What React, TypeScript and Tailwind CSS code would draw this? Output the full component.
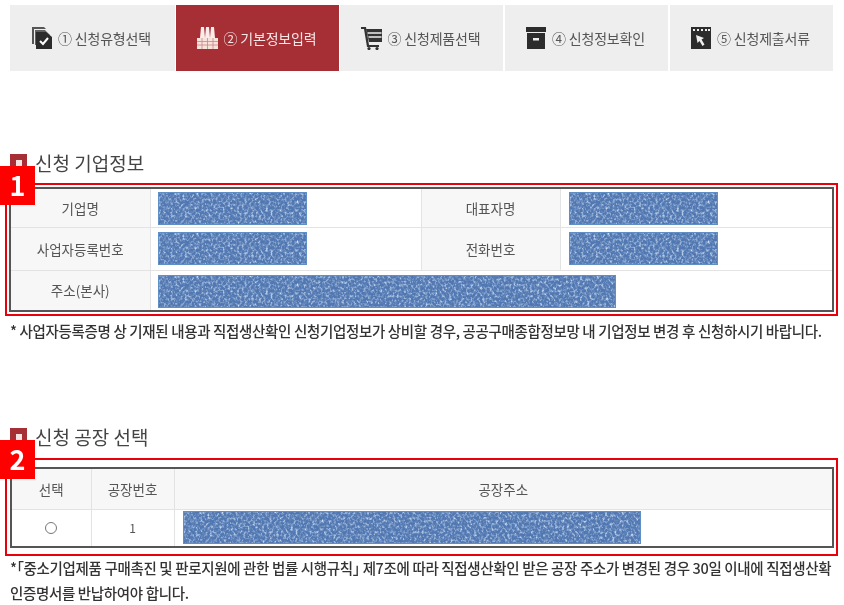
import React from "react";

const font = { fontFamily: '"Noto Sans CJK KR", "Noto Sans", sans-serif' };

function Redact({ w, id }: { w: number; id: string }) {
  return (
    <svg width={w} height={33} className="block border border-[#5f8fc4]">
      <filter id={`${id}l`} x="0" y="0" width="100%" height="100%">
        <feTurbulence type="fractalNoise" baseFrequency="0.42 0.36" numOctaves={2} seed={7} />
        <feColorMatrix type="matrix" values="0 0 0 0 0.68  0 0 0 0 0.78  0 0 0 0 0.95  2.400 0 0 0 -1.100" />
      </filter>
      <filter id={`${id}d`} x="0" y="0" width="100%" height="100%">
        <feTurbulence type="fractalNoise" baseFrequency="0.38 0.44" numOctaves={2} seed={19} />
        <feColorMatrix type="matrix" values="0 0 0 0 0.13  0 0 0 0 0.25  0 0 0 0 0.48  0 2.400 0 0 -1.150" />
      </filter>
      <rect width="100%" height="100%" fill="#5077b2" />
      <rect width="100%" height="100%" filter={`url(#${id}l)`} />
      <rect width="100%" height="100%" filter={`url(#${id}d)`} />
    </svg>
  );
}

const icons = [
  <svg key="1" width="20" height="22" viewBox="0 0 20 22">
    <path d="M0 0h12l2 2H2v15H0z" fill="#555" />
    <path d="M3 3h10l5 5v1H5v9H3z" fill="#333" opacity="0.75" />
    <path d="M4 5h10l6 5v12H4z" fill="#2c2c2c" />
    <path d="M8 14l3 3 5-6" fill="none" stroke="#fff" strokeWidth="2" />
  </svg>,
  <svg key="2" width="21" height="22" viewBox="0 0 21 22">
    <path d="M4 0h3l1 11H3zM9 0h3l1 11H8zM14 0h3l1 11h-5z" fill="#fbeeea" />
    <path d="M0 11h21v11H0z" fill="#f8e2dc" />
    <path d="M0 14.500h21M0 18h21M5 11v11M10.500 11v11M16 11v11" stroke="#c98682" strokeWidth="0.8" />
  </svg>,
  <svg key="3" width="21" height="23" viewBox="0 0 21 23">
    <path d="M0 0h5l3 18h10v2H6L3 2H0z" fill="#333" />
    <path d="M5 2h16v13H8z" fill="#333" />
    <path d="M6.500 6h14M7.500 10h13" stroke="#eee" strokeWidth="1.3" />
    <circle cx="8" cy="21.500" r="1.600" fill="#333" />
    <circle cx="16" cy="21.500" r="1.600" fill="#333" />
  </svg>,
  <svg key="4" width="20" height="22" viewBox="0 0 20 22">
    <path d="M0 0h20v5H0zM1 6h18v16H1z" fill="#2c2c2c" />
    <path d="M7 11h6v2.500H7z" fill="#eee" />
  </svg>,
  <svg key="5" width="20" height="22" viewBox="0 0 20 22">
    <path d="M0 0h20v22H0z" fill="#2c2c2c" />
    <path d="M2 2h2v2H2zM6 2h2v2H6zM10 2h2v2h-2zM14 2h2v2h-2zM17 2h2v2h-2z" fill="#eee" />
    <path d="M5 8l8 3-2.500 1.500 3 5-2 1.500-3-5-2 2z" fill="#eee" />
  </svg>,
];

const tabs = [
  { label: "① 신청유형선택", w: "w-[165px]", on: false },
  { label: "② 기본정보입력", w: "w-[163px]", on: true },
  { label: "③ 신청제품선택", w: "w-[163px]", on: false },
  { label: "④ 신청정보확인", w: "w-[163px]", on: false },
  { label: "⑤ 신청제출서류", w: "w-[163px]", on: false },
];

function Heading({ text, badge }: { text: string; badge: string }) {
  return (
    <div className="relative flex h-[29px] items-center gap-[8px] pl-[10px]">
      <div className="flex h-[17px] w-[17px] items-center justify-center bg-[#a62f36]">
        <div className="h-[6px] w-[6px] bg-[#f3e3e3]" />
      </div>
      <h2 className="text-[19px] leading-none font-normal text-[#444]">{text}</h2>
      <div className="absolute top-[18px] left-0 flex h-[39px] w-[35px] items-center justify-center bg-[#ff0000] text-[27px] font-bold text-white">
        {badge}
      </div>
    </div>
  );
}

const th = "bg-[#f7f7f7] text-center font-normal border border-[#e3e3e3] text-[13.5px] text-[#555]";
const td = "border border-[#e3e3e3] bg-white pl-[8px] align-middle";
const tdl = "border border-[#e3e3e3] bg-white pl-[7px] align-middle";
const note = "pl-[10px] text-[14.5px] font-medium tracking-[-0.35px] whitespace-nowrap text-[#333]";

export default function App() {
  return (
    <div style={font} className="h-[605px] w-[844px] overflow-hidden bg-white pt-[5px] blur-[0.35px]">
      <nav className="ml-[10px] flex w-[823px] gap-[1px]">
        {tabs.map((t, i) => (
          <div
            key={t.label}
            className={`flex h-[66px] items-center justify-center gap-[6px] pr-[2px] ${i >= 3 ? "ml-[1px]" : ""} ${t.w} ${
              t.on ? "bg-[#a62f36] text-[#f6e6e4]" : "bg-[#eeeeee] text-[#555]"
            }`}
          >
            {icons[i]}
            <span className="text-[14px] tracking-[-0.2px]">{t.label}</span>
          </div>
        ))}
      </nav>

      <section className="mt-[77px]">
        <Heading text="신청 기업정보" badge="1" />
        <div className="mx-[5px] mt-[6px] h-[133px] w-[833px] border-[2px] border-[#e8000b] p-[2px]">
          <table className="h-[125px] w-[825px] table-fixed border-collapse border-[2px] border-[#555]">
            <colgroup>
              <col className="w-[140px]" />
              <col className="w-[271px]" />
              <col className="w-[139px]" />
              <col />
            </colgroup>
            <tbody>
              <tr className="h-[39px]">
                <th className={th}>기업명</th>
                <td className={tdl}><Redact w={149} id="a" /></td>
                <th className={th}>대표자명</th>
                <td className={td}><Redact w={149} id="b" /></td>
              </tr>
              <tr className="h-[42px]">
                <th className={th}>사업자등록번호</th>
                <td className={tdl}><Redact w={149} id="c" /></td>
                <th className={th}>전화번호</th>
                <td className={td}><Redact w={149} id="d" /></td>
              </tr>
              <tr className="h-[40px]">
                <th className={th}>주소(본사)</th>
                <td className={`${tdl} pt-[2px]`} colSpan={3}><Redact w={458} id="e" /></td>
              </tr>
            </tbody>
          </table>
        </div>
        <p className={`mt-[5px] leading-[20px] ${note}`}>
          * 사업자등록증명 상 기재된 내용과 직접생산확인 신청기업정보가 상비할 경우, 공공구매종합정보망 내 기업정보 변경 후 신청하시기 바랍니다.
        </p>
      </section>

      <section className="mt-[81px]">
        <Heading text="신청 공장 선택" badge="2" />
        <div className="mx-[5px] mt-[7px] h-[98px] w-[833px] border-[2px] border-[#e8000b] pt-[7px] pl-[3px]">
          <table className="h-[81px] w-[824px] table-fixed border-collapse border-[2px] border-[#555]">
            <colgroup>
              <col className="w-[80px]" />
              <col className="w-[83px]" />
              <col />
            </colgroup>
            <tbody>
              <tr className="h-[41px]">
                <th className={th}>선택</th>
                <th className={th}>공장번호</th>
                <th className={th}>공장주소</th>
              </tr>
              <tr>
                <td className="border border-[#e3e3e3] bg-white align-middle">
                  <div className="mx-auto h-[12px] w-[12px] rounded-full border border-[#777]" />
                </td>
                <td className="border border-[#e3e3e3] bg-white text-center align-middle text-[12px] text-[#555]">1</td>
                <td className={td}><Redact w={458} id="f" /></td>
              </tr>
            </tbody>
          </table>
        </div>
        <p className={`-mt-[1px] leading-[25px] ${note}`}>
          *<span className="[font-feature-settings:'halt']">「</span>중소기업제품 구매촉진 및 판로지원에 관한 법률 시행규칙<span className="[font-feature-settings:'halt']">」</span> 제7조에 따라 직접생산확인 받은 공장 주소가 변경된 경우 30일 이내에 직접생산확
          <br />
          인증명서를 반납하여야 합니다.
        </p>
      </section>
    </div>
  );
}
